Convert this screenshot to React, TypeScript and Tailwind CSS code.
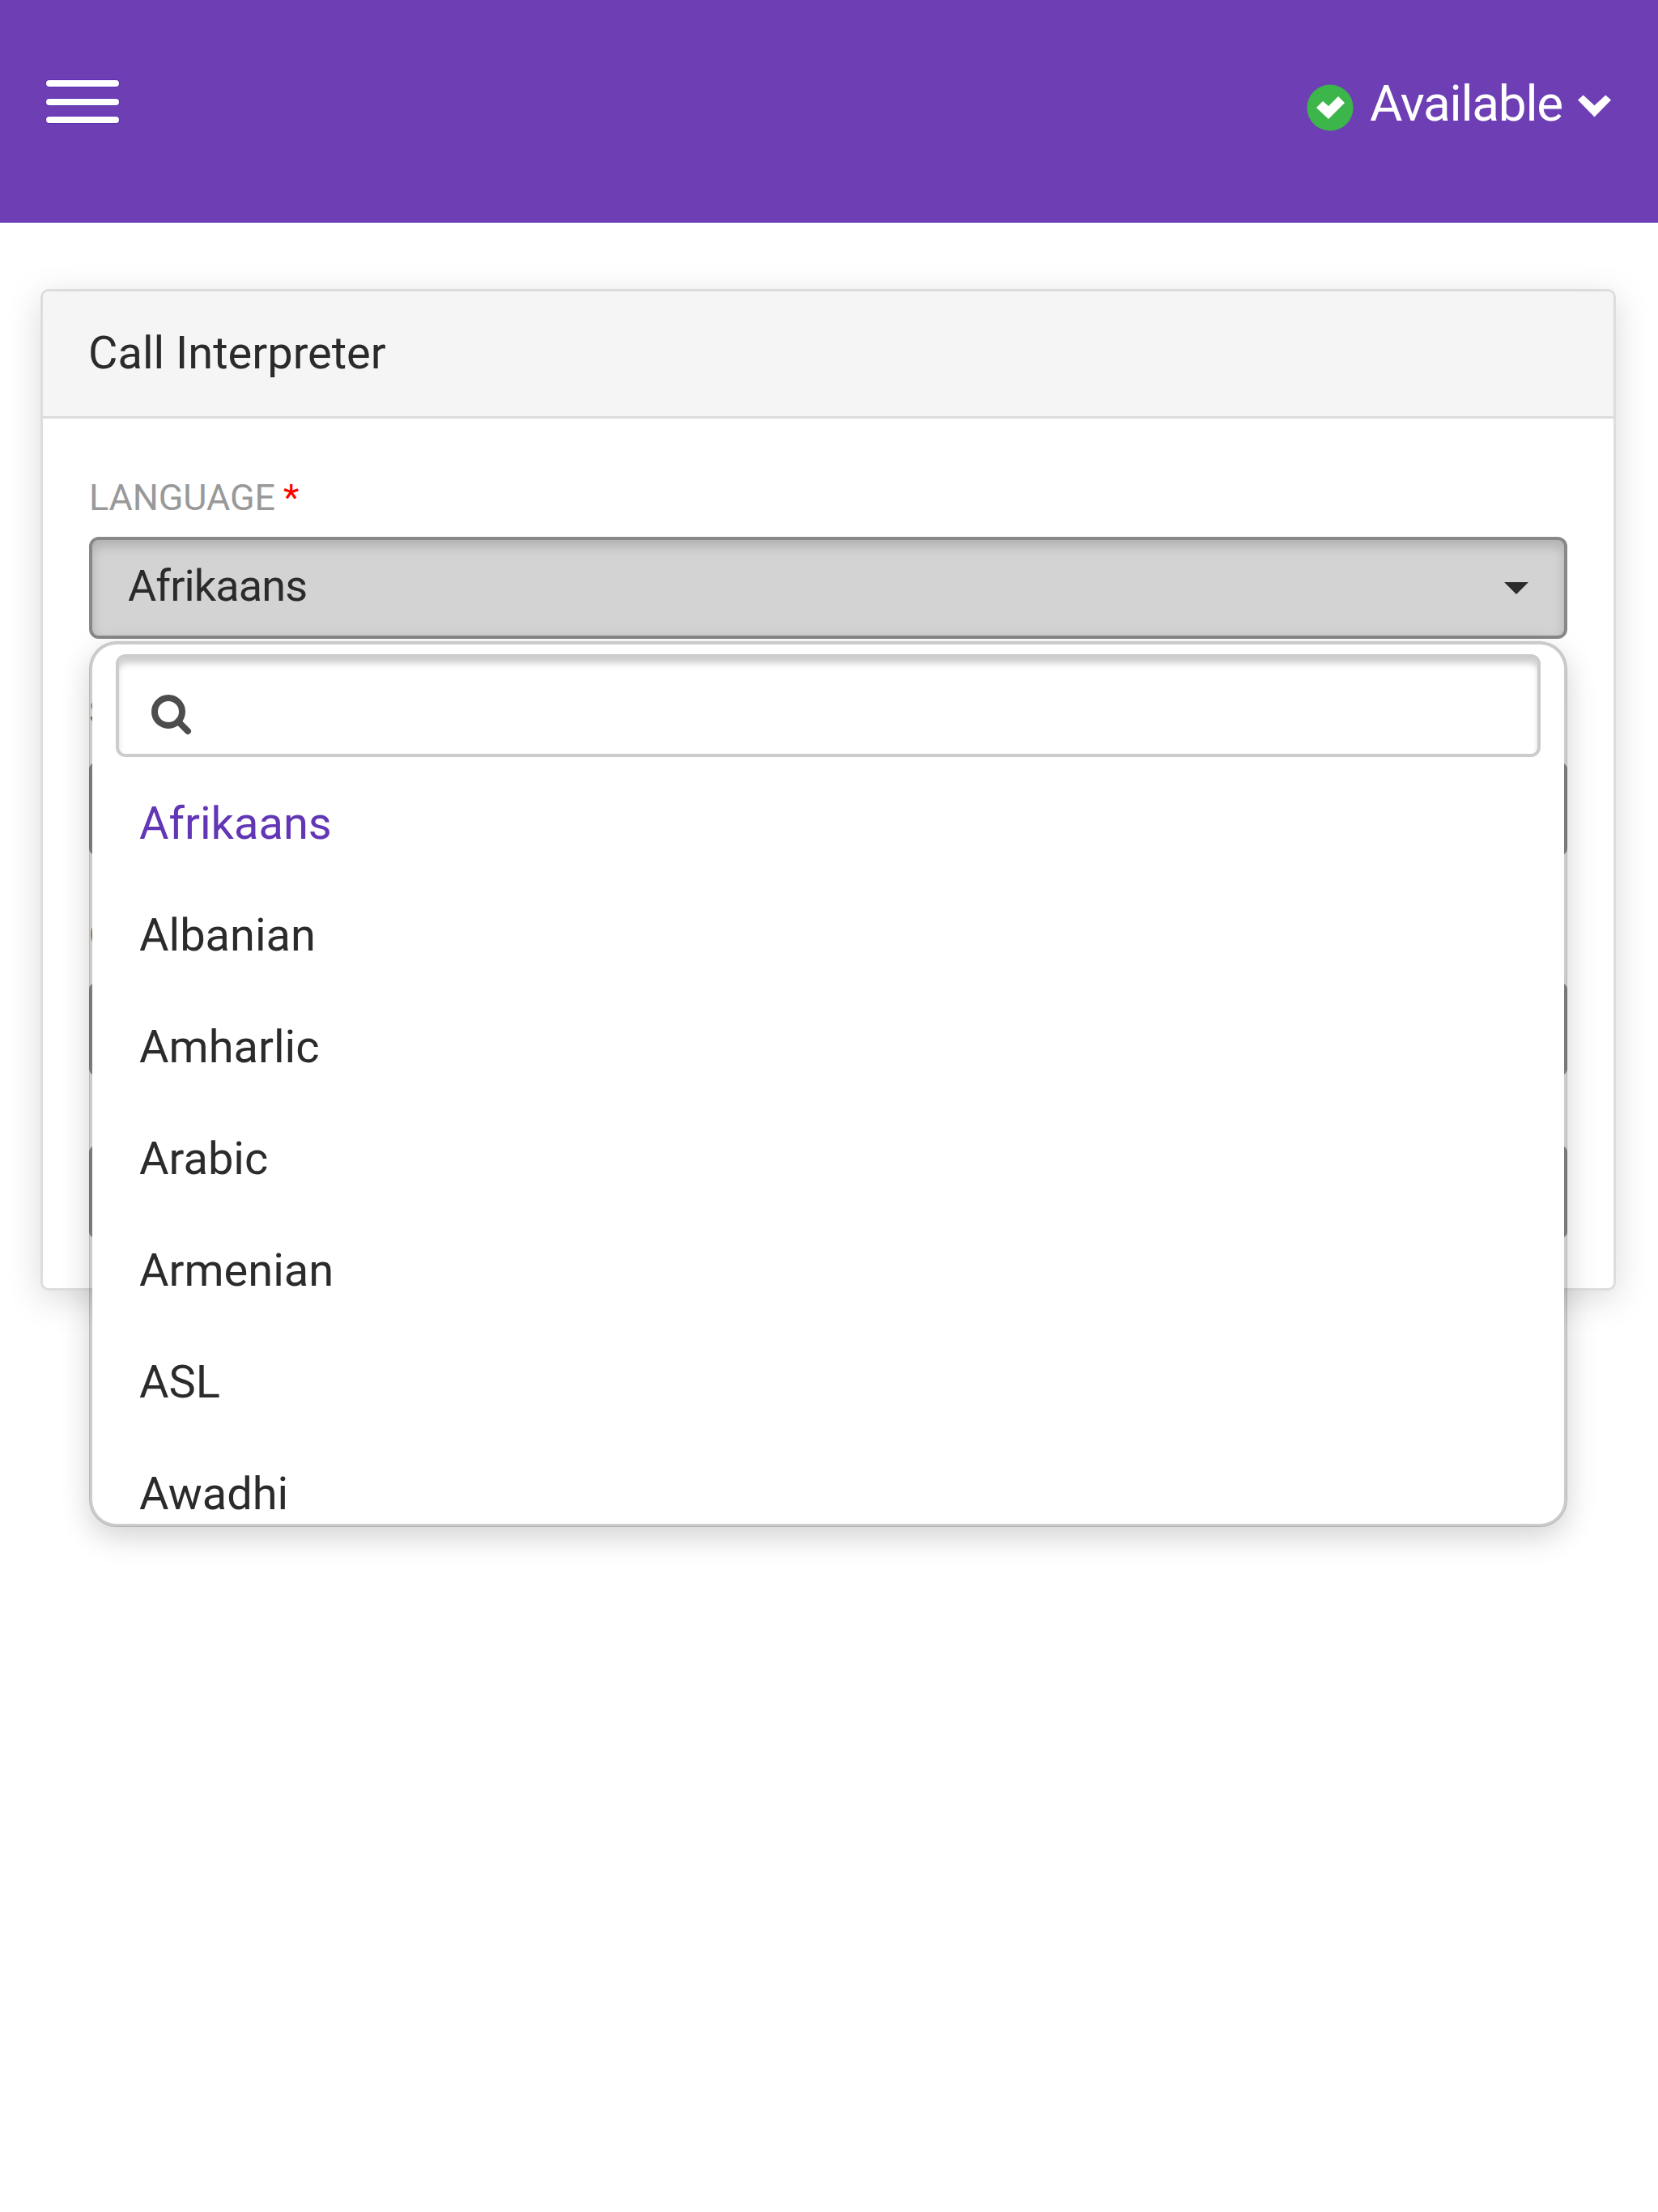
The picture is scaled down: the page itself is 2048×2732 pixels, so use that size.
import React from "react";

const languages = ["Afrikaans", "Albanian", "Amharlic", "Arabic", "Armenian", "ASL", "Awadhi"];

function HamburgerBar() {
  return <div className="h-[8px] w-[90px] rounded-[4px] bg-white shadow-[0_0_0_1px_#5a30b0]" />;
}

function FieldInput() {
  return <div className="h-[114px] rounded-[8px] border-[4px] border-[#999999] bg-white" />;
}

function HiddenLabel({ text }: { text: string }) {
  return <div className="h-[60px] text-[42px] leading-[60px] text-[#777777] opacity-90">{text}</div>;
}

export default function App() {
  return (
    <div className="min-h-[2732px] bg-white [font-family:Roboto,sans-serif] text-[#2b2b2b]">
      <header className="flex h-[275px] items-start justify-between border-b border-[#5a30b0] bg-[#6e3eb5] pl-[57px] pr-[58px]">
        <div className="mt-[99px] flex flex-col gap-[14.5px]">
          <HamburgerBar />
          <HamburgerBar />
          <HamburgerBar />
        </div>
        <div className="mt-[92px] flex h-[72px] items-center">
          <svg viewBox="0 0 58 58" className="mt-[10px] h-[58px] w-[58px]">
            <circle cx="29" cy="29" r="28.5" fill="#3cb54a" />
            <polygon points="12,29 20,21 27,27 39,15 47,23 27,43" fill="#ffffff" />
          </svg>
          <span className="ml-[20px] text-[62px] leading-[72px] tracking-[-1.2px] text-white">Available</span>
          <svg viewBox="1168 177 122 81" className="ml-[19px] mt-[6px] h-[28px] w-[41px]">
            <polygon points="1168,195 1188,177 1229,215 1270,177 1290,195 1229,258" fill="#ffffff" />
          </svg>
        </div>
      </header>

      <main className="ml-[50px] mr-[52px] mt-[82px] rounded-[10px] border-[3px] border-[#dddddd] bg-white shadow-[0_10px_44px_rgba(0,0,0,0.15)]">
        <div className="flex h-[157px] items-center rounded-t-[7px] border-b-[3px] border-[#dddddd] bg-[#f5f5f5] pb-[3px] pl-[56px] text-[56px]">
          Call Interpreter
        </div>
        <div className="px-[57px] pb-[62px] pt-[66px]">
          <div className="flex h-[60px] items-center pt-[3px] text-[45px] tracking-[-0.1px] text-[#999999]">
            LANGUAGE
            <span className="ml-[10px] text-[#ff0000]">*</span>
          </div>
          <div className="relative mt-[20px]">
            <div className="flex h-[126px] items-center justify-between rounded-[12px] border-[4px] border-[#888888] bg-[#d3d3d3] pl-[44px] pr-[44px] text-[54px] tracking-[-0.9px] shadow-[inset_0_8px_14px_rgba(0,0,0,0.16)]">
              <span className="mb-[5px]">Afrikaans</span>
              <svg viewBox="0 0 30 15" className="h-[15px] w-[30px]">
                <polygon points="0,0 30,0 15,15" fill="#2b2b2b" />
              </svg>
            </div>
            <div className="absolute left-0 right-0 top-[129px] z-10 h-[1094px] overflow-hidden rounded-[34px] border-[4px] border-black/20 bg-white bg-clip-padding shadow-[0_12px_36px_rgba(0,0,0,0.175)]">
              <div className="mx-[29px] mt-[12px] flex h-[127px] items-center rounded-[12px] border-[4px] border-[#cccccc] bg-white pl-[40px] shadow-[inset_0_9px_9px_-2px_rgba(0,0,0,0.2)]">
                <svg viewBox="0 0 50 52" className="mt-[24px] h-[52px] w-[50px]">
                  <circle cx="21" cy="21" r="17" fill="none" stroke="#4d4d4d" strokeWidth="8" />
                  <line x1="33" y1="33" x2="45" y2="45" stroke="#4d4d4d" strokeWidth="8" strokeLinecap="round" />
                </svg>
              </div>
              <ul className="mt-[13px]">
                {languages.map((name, i) => (
                  <li
                    key={name}
                    className={
                      i === 0
                        ? "flex h-[138px] items-center pl-[58px] text-[56px] text-[#6236b4]"
                        : "flex h-[138px] items-center pl-[58px] text-[56px]"
                    }
                  >
                    {name}
                  </li>
                ))}
              </ul>
            </div>
          </div>
          <div className="mt-[61px]">
            <HiddenLabel text="S" />
          </div>
          <div className="mt-[32px]">
            <FieldInput />
          </div>
          <div className="mt-[69px]">
            <HiddenLabel text="C" />
          </div>
          <div className="mt-[29px]">
            <FieldInput />
          </div>
          <div className="mt-[87px]">
            <FieldInput />
          </div>
        </div>
      </main>
    </div>
  );
}
